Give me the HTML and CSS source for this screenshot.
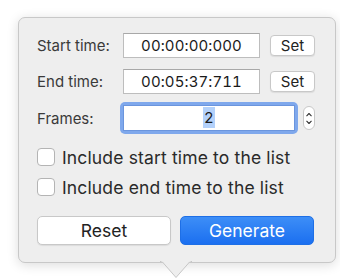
FILE: index.html
```html
<!DOCTYPE html>
<html>
<head>
<meta charset="utf-8">
<link rel="stylesheet" href="styles.css">
</head>
<body>
<div class="popover">
  <div class="row r1">
    <span class="label">Start time:</span>
    <div class="field">00:00:00:000</div>
    <button class="btn-set">Set</button>
  </div>
  <div class="row r2">
    <span class="label">End time:</span>
    <div class="field">00:05:37:711</div>
    <button class="btn-set">Set</button>
  </div>
  <div class="row r3">
    <span class="label">Frames:</span>
    <div class="ring"><div class="field frames"><span class="sel">2</span></div></div>
    <div class="stepper">
      <svg width="11" height="23" viewBox="0 0 11 23"><path d="M3 8.5 L5.5 6 L8 8.5" fill="none" stroke="#333" stroke-width="1.2" stroke-linecap="round" stroke-linejoin="round"/><path d="M3 14.5 L5.5 17 L8 14.5" fill="none" stroke="#333" stroke-width="1.2" stroke-linecap="round" stroke-linejoin="round"/></svg>
    </div>
  </div>
  <label class="check c1"><span class="box"></span><span>Include start time to the list</span></label>
  <label class="check c2"><span class="box"></span><span>Include end time to the list</span></label>
  <div class="actions">
    <button class="btn reset">Reset</button>
    <button class="btn generate">Generate</button>
  </div>
  <svg class="arrow" width="32" height="18" viewBox="0 0 32 18"><path d="M0 0.5 L2 0.5 L16 16.5 L30 0.5 L32 0.5" fill="#eeeeee" stroke="#c6c6c6" stroke-width="1"/><rect x="1" y="-1" width="30" height="1.5" fill="#eeeeee"/></svg>
</div>
</body>
</html>
```
FILE: styles.css
```css
html, body {
  margin: 0;
  padding: 0;
  background: #ffffff;
}
body {
  font-family: "Inter", "Noto Sans", sans-serif;
  color: #222;
  width: 340px;
  height: 280px;
  overflow: hidden;
}
.popover {
  position: relative;
  box-sizing: border-box;
  margin: 17px 0 0 18px;
  width: 318px;
  height: 246px;
  background: #eeeeee;
  border: 1px solid #c8c8c8;
  border-radius: 7px;
  box-shadow: 0 2px 12px rgba(0,0,0,0.14);
  padding: 15px 0 0 18px;
  display: flex;
  flex-direction: column;
}
.row {
  display: flex;
  align-items: center;
}
.r1, .r2 { height: 25px; }
.r2 { margin-top: 11px; }
.r3 { height: 32px; margin-top: 8px; }
.label {
  width: 86px;
  font-size: 15px;
  letter-spacing: 0px;
  color: #3a3a3a;
}
.field {
  box-sizing: border-box;
  width: 137px;
  height: 25px;
  background: #fff;
  border: 1px solid #bdbdbd;
  border-top-color: #a8a8a8;
  font-size: 15px;
  letter-spacing: 0.1px;
  line-height: 23px;
  text-align: center;
  color: #1a1a1a;
  font-variant-numeric: tabular-nums;
}
.btn-set {
  margin-left: 10px;
  box-sizing: border-box;
  width: 45px;
  height: 21px;
  padding: 0;
  background: #fff;
  border: 1px solid #c8c8c8;
  border-radius: 4px;
  box-shadow: 0 1px 1px rgba(0,0,0,0.08);
  font-family: inherit;
  font-size: 15px;
  color: #222;
}
.ring {
  margin-left: -3px;
  box-sizing: border-box;
  width: 178px;
  height: 32px;
  padding: 3px;
  border-radius: 5px;
  background: #7fa8ec;
}
.field.frames {
  width: 172px;
  height: 26px;
  line-height: 24px;
  border: 1px solid #6b95dd;
}
.sel {
  background: #b3d1fb;
  padding: 1px 1px;
}
.stepper {
  margin-left: 5px;
  box-sizing: border-box;
  width: 12px;
  height: 24px;
  background: #fff;
  border: 1px solid #c8c8c8;
  border-radius: 6px;
  display: flex;
  align-items: center;
  justify-content: center;
  overflow: hidden;
}
.check {
  display: flex;
  align-items: center;
  height: 18px;
  font-size: 17.5px;
  letter-spacing: 0.15px;
  color: #2a2a2a;
}
.c1 { margin-top: 14px; }
.c2 { margin-top: 12px; }
.box {
  box-sizing: border-box;
  width: 18px;
  height: 18px;
  background: #fff;
  border: 1px solid #b4b4b4;
  border-radius: 4px;
  margin-right: 7px;
}
.actions {
  display: flex;
  margin-top: 20px;
  gap: 9px;
}
.btn {
  box-sizing: border-box;
  width: 134px;
  height: 29px;
  border-radius: 5px;
  font-family: inherit;
  font-size: 17.5px;
  padding: 0;
}
.reset {
  background: #fff;
  border: 1px solid #c8c8c8;
  color: #222;
  box-shadow: 0 1px 1px rgba(0,0,0,0.08);
}
.generate {
  background: linear-gradient(#3d8ef7, #1b6ff0);
  border: 1px solid #1e6fe6;
  color: #fff;
}
.arrow {
  position: absolute;
  left: 141px;
  bottom: -17px;
}
```
